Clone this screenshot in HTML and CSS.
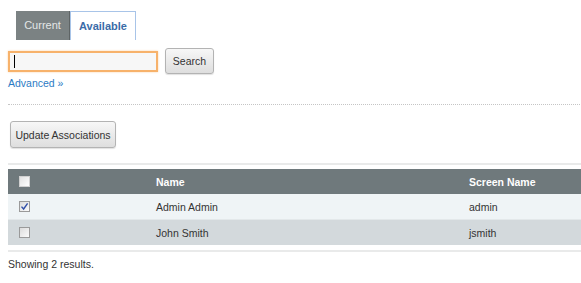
FILE: index.html
```html
<!doctype html>
<html lang="en">
<head>
	<meta charset="UTF-8">
	<title>Associations</title>
	<link rel="stylesheet" href="styles.css">
</head>
<body>
	<div class="page">
		<ul class="tabs">
			<li class="tab">Current</li>
			<li class="tab tab-on">Available</li>
		</ul>
		<div class="search-row">
			<div class="field">
				<input type="text" class="search-input">
				<span class="caret"></span>
			</div>
			<button class="btn btn-search">Search</button>
		</div>
		<a class="advanced" href="#">Advanced &raquo;</a>
		<div class="sep-dotted"></div>
		<button class="btn btn-update">Update Associations</button>
		<div class="sep-solid"></div>
		<table class="results">
			<thead>
				<tr>
					<th class="col-check"><span class="check"></span></th>
					<th class="col-name">Name</th>
					<th>Screen Name</th>
				</tr>
			</thead>
			<tbody>
				<tr class="row-odd">
					<td class="col-check"><span class="check checked">
						<svg width="9" height="9" viewBox="0 0 9 9"><path d="M1.5 4.6 L3.6 7 L7.6 1.3" fill="none" stroke="#3150a8" stroke-width="1.4"/></svg>
					</span></td>
					<td>Admin Admin</td>
					<td>admin</td>
				</tr>
				<tr class="row-even">
					<td class="col-check"><span class="check"></span></td>
					<td>John Smith</td>
					<td>jsmith</td>
				</tr>
			</tbody>
		</table>
		<div class="sep-solid sep-bottom"></div>
		<p class="count">Showing 2 results.</p>
	</div>
</body>
</html>
```

FILE: styles.css
```css
html,
body{
	overflow: hidden;
}
body{
	margin: 0;
	font: 10.5px/14px 'Liberation Sans', Arial, sans-serif;
	color: #333;
	background: #fff;
}
.page{
	width: 600px;
	padding-left: 8px;
}
.tabs{
	display: flex;
	list-style: none;
	margin: 11px 0 0 8px;
	padding: 0;
}
.tab{
	height: 29px;
	line-height: 29px;
	width: 54px;
	text-align: center;
	box-sizing: border-box;
	background: #7b8283;
	color: #e3e7e7;
	border-right: 1px solid #5e6465;
	font-size: 11px;
}
.tab-on{
	width: 66px;
	background: #fff;
	color: #3b6ca8;
	font-weight: bold;
	border: 1px solid #a8c4e8;
	border-bottom: none;
}
.search-row{
	display: flex;
	align-items: center;
	margin-top: 8px;
	height: 26px;
}
.field{
	position: relative;
}
.search-input{
	display: block;
	width: 150px;
	height: 21px;
	box-sizing: border-box;
	margin: 0;
	padding: 0 4px;
	border: 2px solid #f7b26b;
	background: #f7f7f7;
	box-shadow: 0 0 2px #fbd3a8;
	outline: none;
}
.caret{
	position: absolute;
	left: 6px;
	top: 4px;
	width: 1px;
	height: 13px;
	background: #000;
}
.btn{
	font: 10.5px 'Liberation Sans', Arial, sans-serif;
	color: #333;
	background: linear-gradient(#f7f7f7, #dedede);
	border: 1px solid #b3b3b3;
	border-radius: 3px;
	box-shadow: 0 1px 1px rgba(0,0,0,.12);
	padding: 0;
	height: 26px;
}
.btn-search{
	width: 49px;
	margin-left: 7px;
}
.advanced{
	display: block;
	margin-top: 2px;
	color: #2b7bc4;
	text-decoration: none;
	width: 60px;
}
.sep-dotted{
	margin-top: 14px;
	border-top: 1px dotted #c5c5c5;
}
.btn-update{
	display: block;
	margin: 16px 0 0 2px;
	height: 27px;
	width: 106px;
}
.sep-solid{
	margin-top: 15px;
	border-top: 2px solid #e9eaea;
}
.results{
	margin-top: 4px;
	width: 100%;
	border-collapse: collapse;
}
.results th,
.results td{
	height: 25px;
	padding: 0 10px;
	text-align: left;
	vertical-align: middle;
}
.results th{
	background: #6f797c;
	color: #fff;
	font-weight: bold;
}
.col-check{
	width: 118px;
}
.col-name{
	width: 293px;
}
.row-odd td{
	background: #eff4f6;
	border-bottom: 1px solid #e3e8ea;
}
.row-even td{
	background: #d3d9dc;
}
.check{
	display: block;
	width: 11px;
	height: 11px;
	box-sizing: border-box;
	border: 1px solid #9a9a9a;
	background: linear-gradient(135deg, #dcdcdc, #fbfbfb);
	margin-left: 1px;
	position: relative;
}
.results th .check{
	border-color: #d0d0d0;
	background: linear-gradient(135deg, #e2e2e2, #fff);
}
.check svg{
	position: absolute;
	left: 0;
	top: 0;
}
.sep-bottom{
	margin-top: 5px;
}
.count{
	margin: 5px 0 0;
}
```
